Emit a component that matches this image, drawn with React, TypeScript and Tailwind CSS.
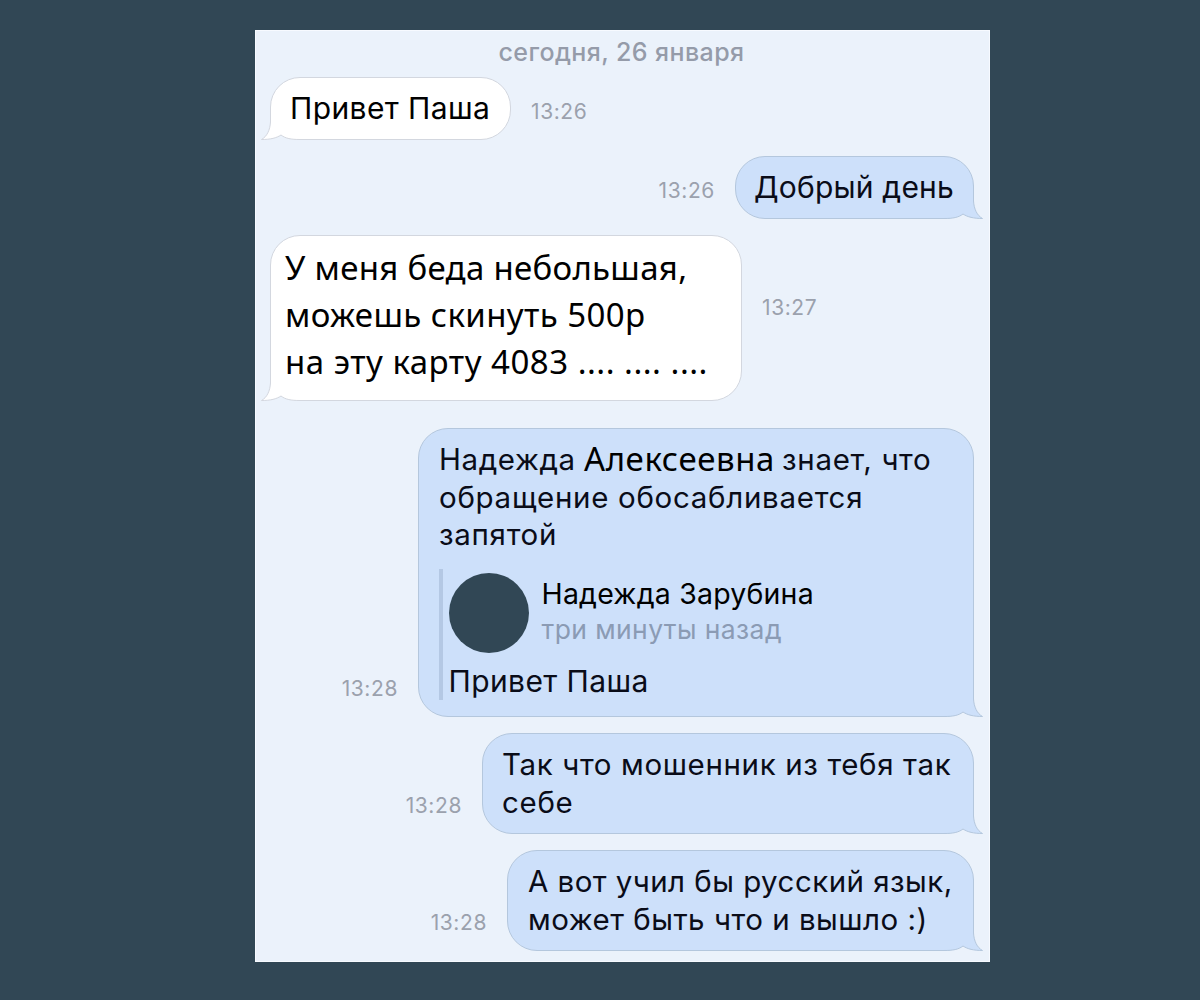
import type { ReactNode } from 'react'

interface BubbleProps {
  side: 'left' | 'right'
  time: string
  row: string
  size: string
  timeOffset: string
  children: ReactNode
}

function Tail({ side }: { side: 'left' | 'right' }) {
  const incoming = side === 'left'
  const fill = incoming ? '#ffffff' : '#cde0fa'
  const stroke = incoming ? '#d3d7df' : '#b4c7dd'
  return (
    <svg
      className={`absolute -bottom-px h-10 w-12 ${incoming ? '-left-2.5 -scale-x-100' : '-right-2.5'}`}
      viewBox="0 0 48 40"
      fill="none"
    >
      <path d="M38.5 9V22C39 30 42 36.5 47.5 39.5C38.5 39.5 32.5 38 28 35C23.5 38.5 18 39.5 11 39.5L8 38L8 9Z" fill={fill} />
      <path
        d="M38.5 9V22C39 30 42 36.5 47.5 39.5C38.5 39.5 32.5 38 28 35C23.5 38.5 18 39.5 9 39.5"
        stroke={stroke}
        strokeLinejoin="round"
      />
    </svg>
  )
}

function Message({ side, time, row, size, timeOffset, children }: BubbleProps) {
  const incoming = side === 'left'
  return (
    <div className={`flex items-end ${incoming ? 'flex-row pl-[14px]' : 'flex-row-reverse pr-[15px]'} gap-5 ${row}`}>
      <div
        className={`relative rounded-[30px] border text-[29.5px] leading-[37.5px] tracking-[0.7px] whitespace-nowrap ${
          incoming ? 'border-[#d3d7df] bg-white text-black' : 'border-[#b4c7dd] bg-[#cde0fa] text-[#0a0c18]'
        } ${size}`}
      >
        <Tail side={side} />
        <div className="relative">{children}</div>
      </div>
      <span className={`text-[21px] leading-6 tracking-[0.6px] text-[#9ba1ad] ${timeOffset}`}>{time}</span>
    </div>
  )
}

export default function App() {
  return (
    <div className="flex h-[1000px] w-[1200px] bg-[#314755] pt-[30px] pl-[255px] font-['Inter',sans-serif]">
      <div className="h-[932px] w-[735px] border border-[#f7faff] bg-[#ebf2fb]">
        <div className="pt-[6px] pr-[2px] text-center text-[25px] leading-[30px] font-medium tracking-[0.4px] text-[#959ba9]">
          сегодня, 26 января
        </div>

        <Message side="left" time="13:26" row="mt-[10px]" size="h-[63px] w-[241px] pl-[19px] pt-[12px]" timeOffset="pb-[16px]">
          <p className="text-[30px] tracking-[0.4px]">Привет Паша</p>
        </Message>

        <Message side="right" time="13:26" row="mt-[16px]" size="h-[63px] w-[239px] pl-[18px] pt-[12px]" timeOffset="pb-[16px]">
          <p className="text-[30px] tracking-[0.2px]">Добрый день</p>
        </Message>

        <Message
          side="left"
          time="13:27"
          row="mt-[16px]"
          size="h-[166px] w-[472px] pl-[14px] pt-[8px]"
          timeOffset="pb-[81px]"
        >
          <div className="font-['Noto_Sans',sans-serif] text-[33px] leading-[47px] tracking-[0.4px]">
            <p className="tracking-[0.3px]">У меня беда небольшая,</p>
            <p>можешь скинуть 500р</p>
            <p className="tracking-[0.5px]">на эту карту 4083 .... .... ....</p>
          </div>
        </Message>

        <Message
          side="right"
          time="13:28"
          row="mt-[27px]"
          size="h-[289px] w-[556px] pl-[20px] pt-[12px]"
          timeOffset="pb-[16px]"
        >
          <p className="flex h-[37.5px]">
            <span className="w-[145px] tracking-[0.6px]">Надежда</span>
            <span className="-mt-px w-[198px] font-['Noto_Sans',sans-serif] text-[33px] tracking-[0.6px] text-black">
              Алексеевна
            </span>
            <span>знает, что</span>
          </p>
          <p>обращение обосабливается</p>
          <p>запятой</p>
          <div className="mt-[15px] h-[131px] border-l-4 border-[#b4c8e4] pl-[5.5px]">
            <div className="flex gap-[13px] pt-[4px]">
              <div className="size-[80px] rounded-full bg-[#314755]" />
              <div className="pt-[3.5px]">
                <p className="text-[28.5px] leading-[36px] tracking-[0.2px] text-black">Надежда Зарубина</p>
                <p className="text-[26.5px] leading-[35px] tracking-[0.4px] text-[#8b9bb4]">три минуты назад</p>
              </div>
            </div>
            <p className="mt-[10.5px] text-[30px] tracking-[0.4px]">Привет Паша</p>
          </div>
        </Message>

        <Message
          side="right"
          time="13:28"
          row="mt-[16px]"
          size="h-[101px] w-[492px] pl-[19px] pt-[12px]"
          timeOffset="pb-[16px]"
        >
          <p className="tracking-[0.63px]">Так что мошенник из тебя так</p>
          <p>себе</p>
        </Message>

        <Message
          side="right"
          time="13:28"
          row="mt-[16px]"
          size="h-[101px] w-[467px] pl-[20px] pt-[12px]"
          timeOffset="pb-[16px]"
        >
          <p className="tracking-[0.46px]">А вот учил бы русский язык,</p>
          <p className="tracking-[0.5px]">может быть что и вышло :)</p>
        </Message>
      </div>
    </div>
  )
}
